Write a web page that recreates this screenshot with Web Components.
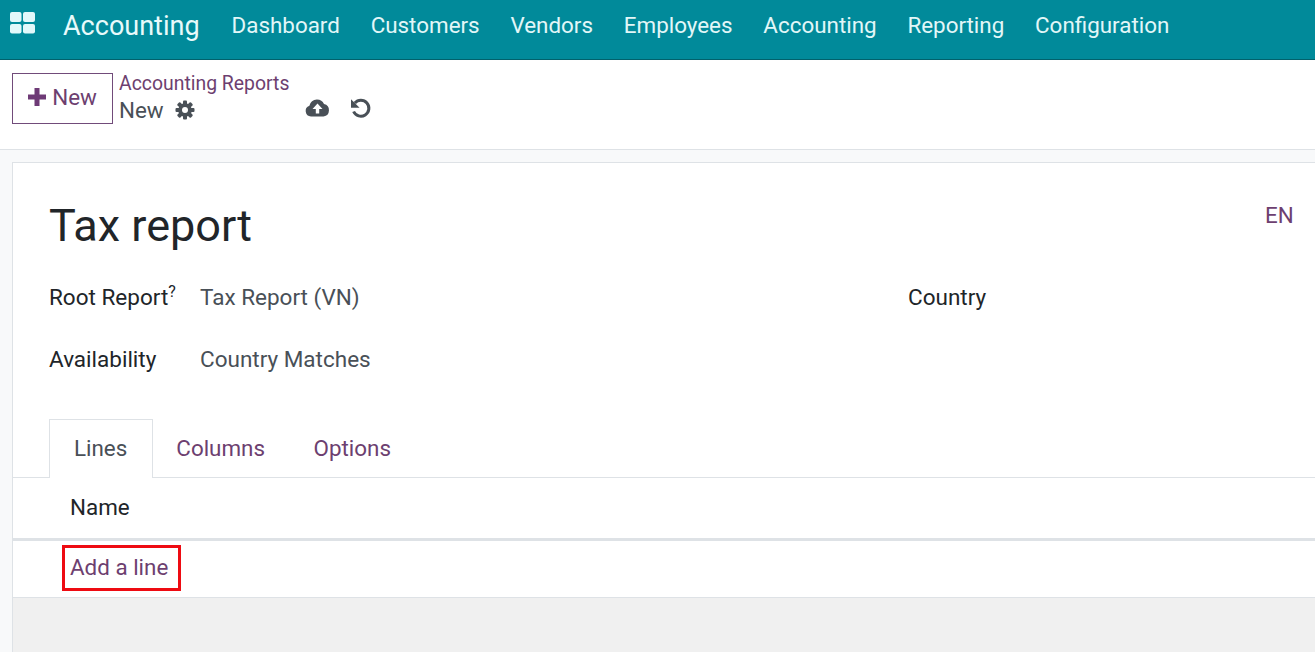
<!DOCTYPE html>
<html><head><meta charset="utf-8"><style>
html,body{margin:0;padding:0;height:652px;overflow:hidden;background:#f8f9fa;font-family:Roboto,sans-serif;font-size:22.4px;color:#212529}
</style></head><body>
<app-nav></app-nav>
<control-bar></control-bar>
<form-sheet></form-sheet>
<script>
class AppNav extends HTMLElement{constructor(){super();this.attachShadow({mode:'open'}).innerHTML=`<style>
:host{display:flex;align-items:center;height:59px;background:#018a9a;border-bottom:1px solid #01616c;color:#e2f7f8;font-size:22.4px;box-sizing:content-box}
svg{display:block;margin:-15px 0 0 9px}
.brand{font-size:27px;color:#e8fafb;margin:-7px 32px 0 27px}
nav{display:flex;gap:30.8px;margin-top:-10px}
</style><svg width="27" height="23" viewBox="0 0 27 23" fill="#e2f8fa"><rect x="1" y="1" width="11.500" height="10" rx="2"/><rect x="14" y="1" width="12" height="10" rx="2"/><rect x="1" y="13" width="11.500" height="9.500" rx="2"/><rect x="14" y="13" width="12" height="9.500" rx="2"/></svg>
<span class="brand">Accounting</span><nav><span>Dashboard</span><span>Customers</span><span>Vendors</span><span>Employees</span><span>Accounting</span><span>Reporting</span><span>Configuration</span></nav>`}}
customElements.define('app-nav',AppNav);
class ControlBar extends HTMLElement{constructor(){super();this.attachShadow({mode:'open'}).innerHTML=`<style>
:host{display:flex;align-items:flex-start;height:89px;background:#fff;border-bottom:1px solid #dee2e6;padding-left:12px;box-sizing:content-box;font-size:22.4px}
.new{display:flex;align-items:center;justify-content:center;gap:6px;box-sizing:border-box;width:101px;height:51px;margin-top:13px;border:1px solid #714b7a;color:#6d3f70;padding:0 0 4px 0}
.crumb{margin:12px 0 0 6px;width:186px}
.link{font-size:19.4px;color:#6d3f70;line-height:24px}
.cur{display:flex;align-items:center;gap:11px;color:#495057;line-height:30px;margin-top:-1px}
.icons{display:flex;align-items:center;gap:21px;margin-top:37px}
svg{display:block}
</style><div class="new"><svg width="18" height="18" viewBox="0 0 18 18" fill="#6e3a76"><path d="M6.500 0h5v6.500H18v5h-6.500V18h-5v-6.500H0v-5h6.500z"/></svg><span>New</span></div>
<div class="crumb"><div class="link">Accounting Reports</div><div class="cur"><span>New</span><svg width="20" height="20" viewBox="0 0 20 20"><g fill="#495057"><circle cx="10" cy="10" r="6.800"/><rect x="8" y="0.500" width="4" height="19" rx="1"/><rect x="8" y="0.500" width="4" height="19" rx="1" transform="rotate(45 10 10)"/><rect x="8" y="0.500" width="4" height="19" rx="1" transform="rotate(90 10 10)"/><rect x="8" y="0.500" width="4" height="19" rx="1" transform="rotate(135 10 10)"/></g><circle cx="10" cy="10" r="3" fill="#fff"/></svg></div></div>
<div class="icons"><svg width="25" height="20" viewBox="0 0 25 20"><path fill="#495057" d="M6 18.500a5.500 5.500 0 0 1-1.600-10.700A7.500 7.500 0 0 1 12 1.500a7.600 7.600 0 0 1 7 4.600 6.300 6.300 0 0 1-.5 12.400z"/><path fill="#fff" d="M12.500 5.500 7.500 11h3.300v4.500h3.400V11h3.300z"/></svg>
<svg width="22" height="22" viewBox="0 0 22 22" fill="none" style="margin-left:-1px"><path d="M4.800 6A8 8 0 1 1 3.600 14.500" stroke="#495057" stroke-width="3"/><path d="M1 2.200v8.600h8.600z" fill="#495057"/></svg></div>`}}
customElements.define('control-bar',ControlBar);
class FieldRow extends HTMLElement{constructor(){super();this.attachShadow({mode:'open'}).innerHTML=`<style>
:host{display:flex;height:62px;align-items:flex-start;line-height:30px;font-size:22.5px}
.l{color:#212529;width:151px;flex:none}
.v{color:#495057}
</style><span class="l"><slot name="label"></slot></span><span class="v"><slot></slot></span>`}}
customElements.define('field-row',FieldRow);
class FormSheet extends HTMLElement{constructor(){super();this.attachShadow({mode:'open'}).innerHTML=`<style>
:host{display:flex;flex-direction:column;position:relative;box-sizing:border-box;margin:12px 0 0 12px;height:490px;background:#fff;border:1px solid #dee2e6;border-right:0;border-bottom:0;font-size:22.4px;line-height:30px}
h1{font-weight:400;font-size:45px;line-height:52px;margin:37px 0 0 36px;color:#212529}
.en{position:absolute;left:1252px;top:37px;color:#6d3f70}
.fields{display:flex;margin:30px 0 0 36px}
.col{width:859px}
.country{color:#212529;font-size:22.5px}
sup{font-size:16px;line-height:0}
.tabs{display:flex;margin-top:13px;padding-left:36px;height:59px;box-sizing:border-box;border-bottom:1px solid #dee2e6;color:#6d3f70}
.tab{padding:14px 24px 0;box-sizing:border-box;height:59px}
.tab.active{padding:13px 25px 0 24px;border:1px solid #dee2e6;border-bottom:0;background:#fff;color:#495057}
.tab.second{margin-left:-1px;padding-right:24.5px}
.head{height:63px;box-sizing:border-box;padding:14px 0 0 57px;border-bottom:3px solid #dee2e6}
.add{height:57px;box-sizing:border-box;padding:11px 0 0 57px;color:#6d3f70;border-bottom:1px solid #dee2e6;position:relative}
.mark{position:absolute;left:49px;top:4px;width:119px;height:46px;box-sizing:border-box;border:3px solid #ee0b12}
.foot{flex:1;background:#f0f0f0}
</style><h1>Tax report</h1><span class="en">EN</span>
<div class="fields"><div class="col"><field-row><span slot="label">Root Report<sup>?</sup></span>Tax Report (VN)</field-row><field-row><span slot="label">Availability</span>Country Matches</field-row></div><div class="country">Country</div></div>
<div class="tabs"><div class="tab active">Lines</div><div class="tab second">Columns</div><div class="tab">Options</div></div>
<div class="head">Name</div>
<div class="add">Add a line<span class="mark"></span></div>
<div class="foot"></div>`}}
customElements.define('form-sheet',FormSheet);
</script></body></html>
